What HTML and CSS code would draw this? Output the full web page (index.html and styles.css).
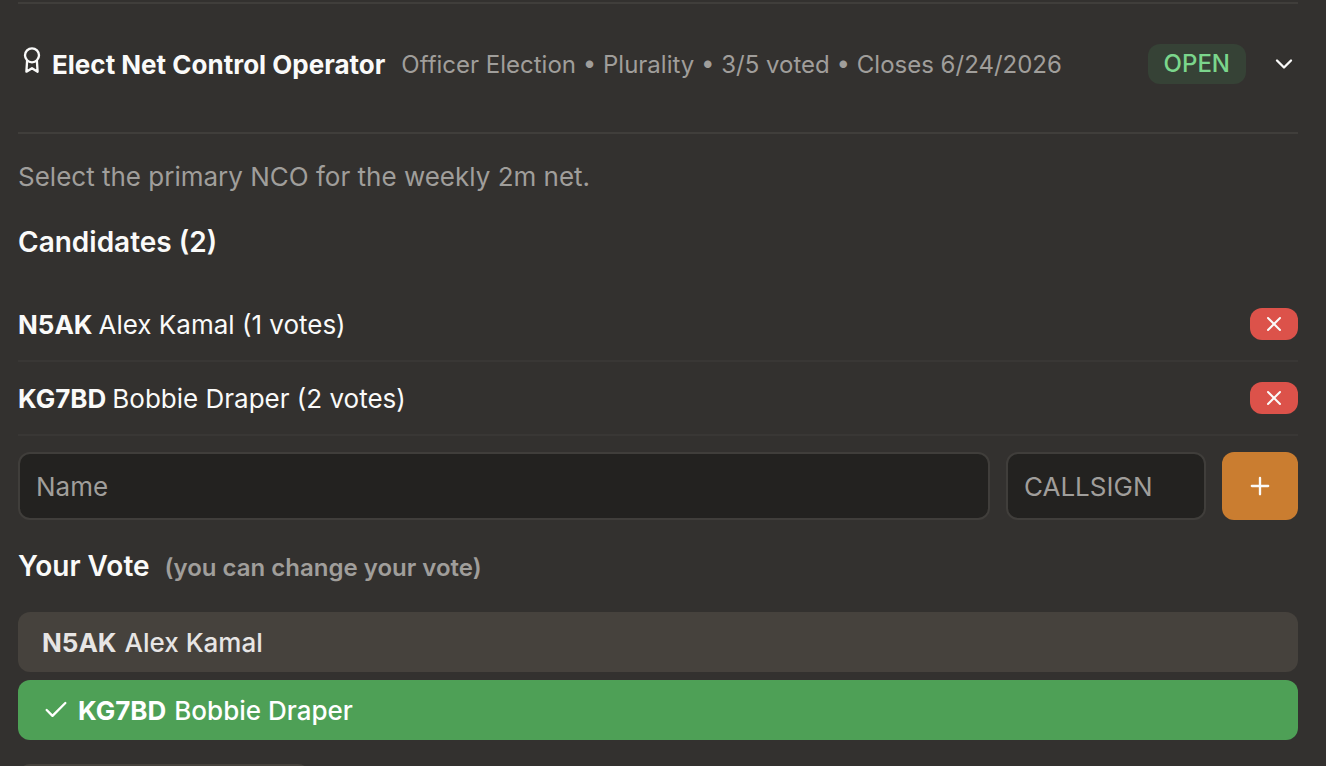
FILE: index.html
```html
<!DOCTYPE html>
<html lang="en">

<head>
    <meta charset="UTF-8">
    <meta name="viewport" content="width=device-width, initial-scale=1.0">
    <title>Elections</title>
    <link rel="stylesheet" href="styles.css">
</head>

<body>
    <main class="election">
        <header class="election-header">
            <svg class="icon icon-award" viewBox="0 0 24 24" aria-hidden="true">
                <path d="M7.8 12.6 7.2 22l4.8-3 4.8 3-.6-9.4" />
                <circle cx="12" cy="8" r="6" />
            </svg>
            <h2 class="title">Elect Net Control Operator</h2>
            <span class="meta">Officer Election • Plurality • 3/5 voted • Closes 6/24/2026</span>
            <span class="badge">OPEN</span>
            <button class="toggle" type="button" aria-label="Collapse">
                <svg class="icon" viewBox="0 0 24 24" aria-hidden="true">
                    <path d="m6 9 6 6 6-6" />
                </svg>
            </button>
        </header>

        <p class="description">Select the primary NCO for the weekly 2m net.</p>

        <h3 class="heading">Candidates (2)</h3>
        <ul class="candidates">
            <li>
                <span class="candidate"><strong>N5AK</strong> <span>Alex Kamal (1 votes)</span></span>
                <button class="remove" type="button" aria-label="Remove N5AK">
                    <svg class="icon icon-small" viewBox="0 0 24 24" aria-hidden="true">
                        <path d="M18 6 6 18M6 6l12 12" />
                    </svg>
                </button>
            </li>
            <li>
                <span class="candidate"><strong>KG7BD</strong> <span>Bobbie Draper (2 votes)</span></span>
                <button class="remove" type="button" aria-label="Remove KG7BD">
                    <svg class="icon icon-small" viewBox="0 0 24 24" aria-hidden="true">
                        <path d="M18 6 6 18M6 6l12 12" />
                    </svg>
                </button>
            </li>
        </ul>

        <form class="add-form">
            <input class="field field-name" type="text" placeholder="Name" aria-label="Name">
            <input class="field field-callsign" type="text" placeholder="CALLSIGN" aria-label="Callsign">
            <button class="add" type="button" aria-label="Add candidate">
                <svg class="icon" viewBox="0 0 24 24" aria-hidden="true">
                    <path d="M5 12h14M12 5v14" />
                </svg>
            </button>
        </form>

        <h3 class="heading">Your Vote <span class="hint">(you can change your vote)</span></h3>
        <div class="ballot">
            <button class="choice" type="button"><strong>N5AK</strong> <span>Alex Kamal</span></button>
            <button class="choice selected" type="button" aria-pressed="true">
                <svg class="icon" viewBox="0 0 24 24" aria-hidden="true">
                    <path d="M20 6 9 17l-5-5" />
                </svg>
                <strong>KG7BD</strong> <span>Bobbie Draper</span>
            </button>
        </div>

        <button class="action" type="button" aria-label="Close election"></button>
    </main>
</body>

</html>
```

FILE: styles.css
```css
* {
    margin: 0;
    padding: 0;
    box-sizing: border-box;
}

body {
    height: 100vh;
    overflow: hidden;
    background: #33312f;
    color: #fafaf9;
    font-family: Inter, "Liberation Sans", sans-serif;
    font-size: 26px;
    line-height: 40px;
}

button,
input {
    border: none;
    font: inherit;
    color: inherit;
}

button {
    cursor: pointer;
}

strong {
    font-weight: 700;
}

.icon {
    display: block;
    flex: none;
    width: 28px;
    height: 28px;
    fill: none;
    stroke: currentColor;
    stroke-width: 2;
    stroke-linecap: round;
    stroke-linejoin: round;
}

.icon-small {
    width: 24px;
    height: 24px;
}

.election {
    margin: 2px 28px 0 18px;
    border-top: 2px solid #403e3b;
}

/* header */
.election-header {
    display: flex;
    align-items: center;
    height: 130px;
    padding-bottom: 8px;
    border-bottom: 2px solid #403e3b;
}

.icon-award {
    margin: 0 6px 8px 0;
}

.title,
.meta,
.candidate,
.choice strong,
.choice span {
    padding-top: 2px;
}

.title {
    font-size: 26px;
    font-weight: 700;
}

.meta {
    margin-left: 16px;
    color: #a09e9b;
    font-size: 24px;
}

.badge {
    margin-left: auto;
    padding: 0 16px;
    border-radius: 12px;
    background: #364236;
    color: #7bd68c;
    font-size: 24px;
    font-weight: 500;
}

.toggle {
    margin-left: 24px;
    background: none;
}

.description {
    margin-top: 24px;
    color: #a09e9b;
    line-height: 38px;
}

.heading {
    margin-top: 26px;
    font-size: 28px;
    font-weight: 600;
}

/* candidates */
.candidates {
    margin-top: 26px;
    list-style: none;
}

.candidates li {
    display: flex;
    align-items: center;
    justify-content: space-between;
    height: 74px;
    border-bottom: 2px solid #393735;
}

.candidate {
    display: flex;
    gap: 6px;
}

.remove {
    padding: 4px 12px;
    border-radius: 12px;
    background: #dc524a;
}

.add-form {
    display: flex;
    gap: 16px;
    margin-top: 16px;
}

.field {
    height: 68px;
    padding: 0 16px;
    border: 2px solid #403e3b;
    border-radius: 12px;
    background: #232220;
}

.field::placeholder {
    color: #a09e9b;
    opacity: 1;
}

.field-name {
    flex: 1;
    min-width: 0;
}

.field-callsign {
    width: 200px;
}

.add {
    padding: 20px 24px;
    border-radius: 12px;
    background: #ca7d30;
}

/* vote */
.hint {
    margin-left: 8px;
    color: #a09e9b;
    font-size: 24px;
}

.ballot {
    display: flex;
    flex-direction: column;
    gap: 8px;
    margin-top: 24px;
}

.choice {
    display: flex;
    align-items: center;
    gap: 8px;
    height: 60px;
    padding: 0 24px;
    border-radius: 12px;
    background: #46423d;
    color: #e7e5e4;
    font-weight: 500;
}

.choice.selected {
    background: #4ea056;
    color: #fff;
}

.action {
    width: 292px;
    height: 60px;
    margin-top: 24px;
    border-radius: 12px;
    background: #46423d;
}
```
